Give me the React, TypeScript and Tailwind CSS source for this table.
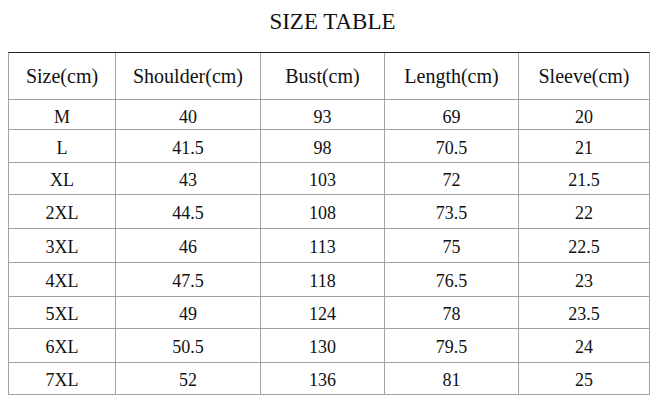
const columns = ["Size(cm)", "Shoulder(cm)", "Bust(cm)", "Length(cm)", "Sleeve(cm)"];

const rows = [
  { h: "h-[30px]", cells: ["M", "40", "93", "69", "20"] },
  { h: "h-[33px]", cells: ["L", "41.5", "98", "70.5", "21"] },
  { h: "h-[32px]", cells: ["XL", "43", "103", "72", "21.5"] },
  { h: "h-[34px]", cells: ["2XL", "44.5", "108", "73.5", "22"] },
  { h: "h-[34px]", cells: ["3XL", "46", "113", "75", "22.5"] },
  { h: "h-[34px]", cells: ["4XL", "47.5", "118", "76.5", "23"] },
  { h: "h-[32px]", cells: ["5XL", "49", "124", "78", "23.5"] },
  { h: "h-[34px]", cells: ["6XL", "50.5", "130", "79.5", "24"] },
  { h: "h-[32px]", cells: ["7XL", "52", "136", "81", "25"] },
];

const grid = "grid grid-cols-[107px_145px_124px_134px_130px]";

export default function App() {
  return (
    <div className="w-[659px] h-[406px] bg-white text-[#111] font-['Liberation_Serif','Times_New_Roman',serif]">
      <div className="h-[52px] flex items-center justify-center pb-[8px] text-[23px] pl-[6px]">
        SIZE TABLE
      </div>

      <div className="ml-[8px] w-[642px] border-t border-t-[#222] border-x border-x-[#a3a3a3]">
        <div className={`${grid} h-[47px] border-b border-[#a3a3a3] text-[20px]`}>
          {columns.map((c, i) => (
            <div
              key={c}
              className={`flex items-center justify-center ${i < 4 ? "border-r border-[#a3a3a3]" : ""}`}
            >
              {c}
            </div>
          ))}
        </div>

        {rows.map((row) => (
          <div key={row.cells[0]} className={`${grid} ${row.h} border-b border-[#a3a3a3] text-[18px]`}>
            {row.cells.map((v, i) => (
              <div
                key={i}
                className={`flex items-center justify-center pt-[4px] ${i < 4 ? "border-r border-[#a3a3a3]" : ""}`}
              >
                {v}
              </div>
            ))}
          </div>
        ))}
      </div>
    </div>
  );
}
